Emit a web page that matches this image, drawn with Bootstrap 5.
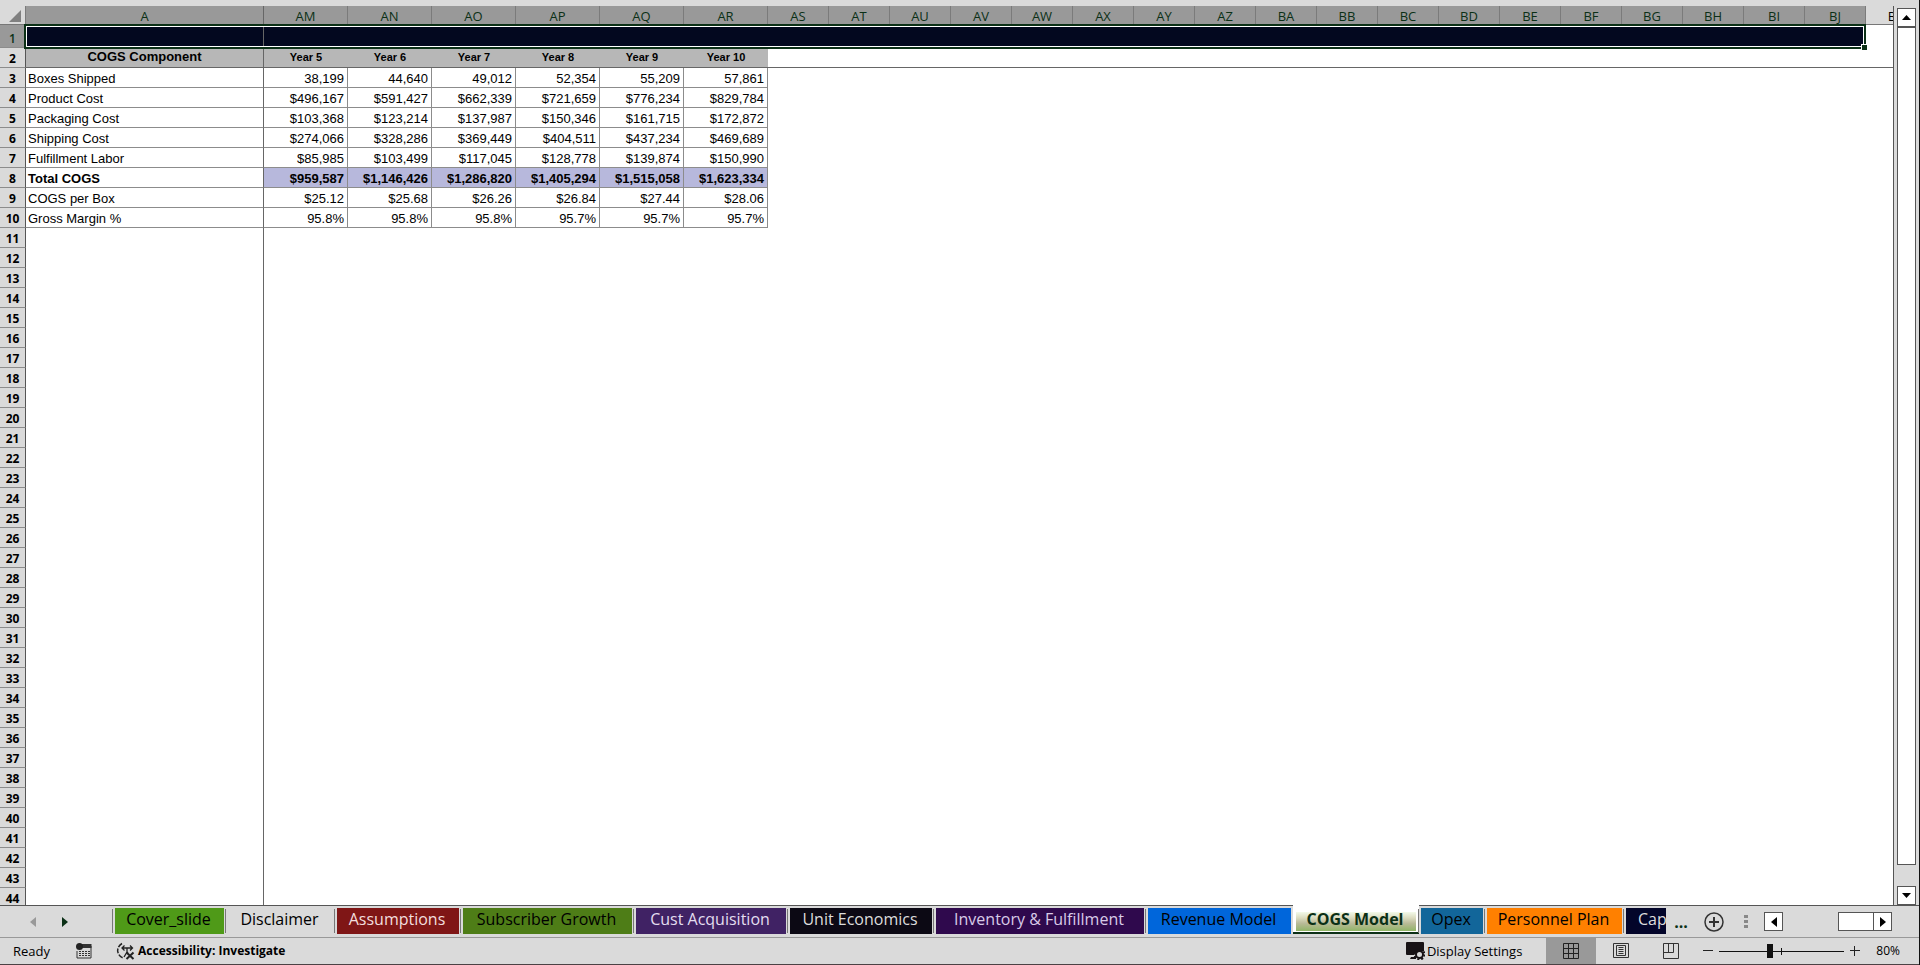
<!DOCTYPE html>
<html lang="en">
<head>
<meta charset="utf-8">
<meta name="viewport" content="width=device-width, initial-scale=1">
<title>COGS Model</title>
<link href="https://cdn.jsdelivr.net/npm/bootstrap@5.3.0/dist/css/bootstrap.min.css" rel="stylesheet">
<style>
  :root { --chrome: #dadada; --head-on: #999; --line: #8c8c8c; --edge: #555; --forest: #0b3016; }
  body { background: var(--chrome); color: #000; font-family: "Open Sans", "Noto Sans", sans-serif; font-size: 12px; line-height: 18px; }
  button { color: inherit; }

  /* worksheet grid */
  .workspace { border-right: 1px solid #111; }
  .sheet-view { margin-top: 6px; border-right: 1px solid var(--edge); background: #fff; }
  .sheet-grid { table-layout: fixed; width: 1927px; border-collapse: separate; border-spacing: 0; font-family: "Liberation Sans", Arial, sans-serif; font-size: 13px; line-height: 16px; }
  .sheet-grid th, .sheet-grid td { padding: 0; height: 20px; white-space: nowrap; overflow: hidden; }
  .w-num { width: 26px; } .w-label { width: 238px; } .w-year { width: 84px; } .w-plain { width: 61px; }
  .sheet-grid .col-head th { height: 19px; padding-top: 2px; background: var(--head-on); color: var(--forest); font: 500 13px/16px "Open Sans", "Noto Sans", sans-serif; text-align: center; border-right: 1px solid #7b7b7b; border-bottom: 1px solid #777; }
  .sheet-grid .col-head th.off, .sheet-grid .col-head th.pick-all { background: var(--chrome); }
  .sheet-grid .col-head th.off { color: #000; }
  .sheet-grid tbody th.row-num { padding-top: 3px; background: var(--chrome); font: 700 12px/16px "Open Sans", "Noto Sans", sans-serif; text-align: center; border-right: 1px solid var(--edge); border-bottom: 1px solid var(--line); }
  .sheet-grid tbody tr.banner th { height: 23px; padding-top: 6px; background: var(--head-on); color: var(--forest); font-weight: 600; }
  .banner .fill { background: #03081f; }
  .sheet-grid .label-cell, .sheet-grid .col-head .label-cell { border-right: 1px solid #666; }
  .titles .label-cell, .titles .year-cell { background: #b7b7b7; font-weight: 700; text-align: center; }
  .titles .year-cell { font-size: 11px; }
  .sheet-grid .titles td, .sheet-grid .titles .label-cell, .sheet-grid .titles .year-cell { padding-bottom: 1px; border-bottom: 1px solid #666; }
  .figures .label-cell { font-weight: 400; text-align: left; border-bottom: 1px solid var(--line); }
  .sheet-grid .figures .label-cell { padding: 3px 0 0 2px; }
  .sheet-grid .figures .year-cell { padding: 3px 3px 0 0; text-align: right; border-right: 1px solid var(--line); border-bottom: 1px solid var(--line); }
  .figures.total .label-cell, .figures.total .year-cell { font-weight: 700; }
  .figures.total .year-cell { background: #b7b8dc; }
  .selection { left: 24px; top: 18px; width: 1842px; height: 25px; border: 2px solid var(--forest); box-shadow: inset 0 0 0 1px #fff; pointer-events: none; }
  .selection::after { content: ""; position: absolute; right: -3px; bottom: -3px; width: 6px; height: 6px; background: var(--forest); border-left: 1px solid #fff; border-top: 1px solid #fff; }

  /* scrollbars */
  .v-scroll { width: 25px; padding: 8px 3px 0 3px; }
  .scroll-btn { width: 19px; height: 19px; padding: 0; border: 1px solid var(--edge); background: #fff; display: grid; place-items: center; flex: none; }
  .v-thumb { width: 19px; border: 1px solid var(--edge); background: #fff; margin-bottom: 21px; }
  .h-track { padding-left: 55px; }
  .h-thumb { width: 35px; height: 19px; border: 1px solid var(--edge); border-right: 0; background: #fff; }
  .h-scroll { margin-right: 27px; }

  /* sheet tabs */
  .tab-strip { height: 33px; border-top: 1px solid var(--edge); border-bottom: 1px solid #999; }
  .tab-nav { width: 111px; padding-left: 28px; gap: 22px; }
  .tab-nav button { padding: 0; border: 0; background: none; width: 10px; line-height: 10px; }
  .tabs { gap: 4px; padding-top: 2px; }
  .sheet-tab { position: relative; height: 26px; padding: 0 2px 4px 0; border: 0; font-size: 16px; line-height: 20px; text-align: center; white-space: nowrap; flex: none; }
  .sheet-tab:not(.current)::before { content: ""; position: absolute; left: -3px; top: 1px; height: 24px; border-left: 1px solid #777; }
  .t-cover { width: 109px; background: #4f9a18; }
  .t-disc { width: 105px; background: none; }
  .t-assume { width: 122px; background: #7f1616; color: #f3dede; }
  .t-subs { width: 169px; background: #4e7d17; }
  .t-cust { width: 150px; background: #402264; color: #e4def0; }
  .t-unit { width: 142px; background: #0c0914; color: #ddd; }
  .t-inv { width: 208px; background: #2f094d; color: #d9cbe8; }
  .t-rev { width: 143px; background: #0066db; }
  .t-opex { width: 62px; background: #12669a; }
  .t-people { width: 135px; background: #ff8000; }
  .t-cap { width: 40px; background: #03052a; color: #ddd; padding-left: 12px; padding-right: 0; text-align: left; }
  .sheet-tab.current { width: 126px; height: 29px; margin: -3px -2px 0 -2px; padding: 3px 2px 3px 0; color: var(--forest); font-weight: 700; background: linear-gradient(#f3faea, #dcdcc0 30%, #b9ba98 60%, #90b566) 3px 7px / 120px 19px no-repeat #fff; border-bottom: 2px solid var(--forest); }
  .more-tabs { width: 14px; padding: 0; border: 0; background: none; font-size: 16px; font-weight: 700; line-height: 20px; color: var(--forest); }
  .plain-btn { padding: 0; border: 0; background: none; display: grid; place-items: center; }

  /* status bar */
  .status { height: 27px; border-bottom: 1px solid #4b4144; padding-left: 13px; padding-right: 19px; font-size: 13px; }
  .macro { margin: 0 24px 0 26px; }
  .a11y { font-size: 12px; gap: 3px; }
  .display-set { gap: 2px; margin-right: 24px; }
  .view-btn { width: 50px; height: 26px; }
  .view-btn.on { background: #999; }
  .zoom-tools { gap: 6px; margin-left: 7px; }
  .zoom-value { padding-left: 10px; font-size: 12px; }
  .zoom-range { appearance: none; width: 125px; height: 16px; margin: 0; background: linear-gradient(#111, #111) 0 50% / 100% 1px no-repeat, linear-gradient(#111, #111) 62px 50% / 1px 7px no-repeat; }
  .zoom-range::-webkit-slider-thumb { appearance: none; width: 6px; height: 14px; background: #111; }
</style>
</head>
<body class="vh-100 overflow-hidden">
<div class="workspace d-flex flex-column h-100">
  <main class="d-flex flex-grow-1 overflow-hidden">
    <div class="sheet-view position-relative flex-grow-1 overflow-hidden">
      <table class="sheet-grid" aria-label="COGS Model">
        <colgroup id="cols"></colgroup>
        <thead><tr class="col-head" id="letters"></tr></thead>
        <tbody id="rows"></tbody>
      </table>
      <div class="selection position-absolute"></div>
    </div>
    <div class="v-scroll d-flex flex-column flex-shrink-0">
      <button class="scroll-btn" aria-label="Scroll up"><svg width="9" height="5"><path d="M4.500 0L9 5H0z"/></svg></button>
      <div class="v-thumb flex-grow-1"></div>
      <button class="scroll-btn" aria-label="Scroll down"><svg width="9" height="5"><path d="M0 0h9L4.500 5z"/></svg></button>
    </div>
  </main>

  <nav class="tab-strip d-flex flex-shrink-0 align-items-center" aria-label="Sheets">
    <div class="tab-nav d-flex align-items-center flex-shrink-0">
      <button aria-label="Previous sheets"><svg width="6" height="10"><path d="M6 0v10L0 5z" fill="#999"/></svg></button>
      <button aria-label="Next sheets"><svg width="6" height="10"><path d="M0 0v10l6-5z" fill="#0b3016"/></svg></button>
    </div>
    <div class="tabs d-flex align-self-start ps-1">
      <button class="sheet-tab t-cover">Cover_slide</button>
      <button class="sheet-tab t-disc">Disclaimer</button>
      <button class="sheet-tab t-assume">Assumptions</button>
      <button class="sheet-tab t-subs">Subscriber Growth</button>
      <button class="sheet-tab t-cust">Cust Acquisition</button>
      <button class="sheet-tab t-unit">Unit Economics</button>
      <button class="sheet-tab t-inv">Inventory &amp; Fulfillment</button>
      <button class="sheet-tab t-rev">Revenue Model</button>
      <button class="sheet-tab current" aria-current="page">COGS Model</button>
      <button class="sheet-tab t-opex">Opex</button>
      <button class="sheet-tab t-people">Personnel Plan</button>
      <button class="sheet-tab t-cap"><span class="d-block overflow-hidden">Cap</span></button>
    </div>
    <button class="more-tabs ms-2">...</button>
    <button class="plain-btn ms-3" aria-label="New sheet"><svg width="20" height="20" fill="none" stroke="#333"><circle cx="10" cy="10" r="9" stroke-width="1.500"/><path d="M10 5v10M5 10h10" stroke-width="2"/></svg></button>
    <div class="h-scroll d-flex align-items-center ms-auto">
      <svg class="me-3" width="4" height="14" fill="#888"><path d="M0 0h4v3H0zM0 5h4v3H0zM0 10h4v3H0z"/></svg>
      <button class="scroll-btn" aria-label="Scroll left"><svg width="6" height="10"><path d="M6 0v10L0 5z"/></svg></button>
      <div class="h-track"><div class="h-thumb"></div></div>
      <button class="scroll-btn" aria-label="Scroll right"><svg width="6" height="10"><path d="M0 0v10l6-5z"/></svg></button>
    </div>
  </nav>

  <footer class="status d-flex flex-shrink-0 align-items-center">
    <span>Ready</span>
    <button class="plain-btn macro" aria-label="Record macro"><svg width="16" height="16"><path d="M4 3h11v12H1V8" fill="none" stroke="#333"/><path d="M6 1h9.500v4H6z" fill="#333"/><circle cx="3.500" cy="3.500" r="3.500" fill="#222"/><path d="M3 8.500h2m1 0h2m1 0h2m1 0h2M3 10.500h2m1 0h2m1 0h2m1 0h2M3 12.500h2m1 0h2m1 0h2m1 0h2" stroke="#333"/></svg></button>
    <button class="plain-btn a11y d-flex align-items-center fw-bold"><svg width="19" height="18" fill="none" stroke="#222"><path d="M6 1.500C2 4 .5 8 2.500 12c1 2 2.500 3.500 5 4" stroke-width="1.500" stroke-dasharray="5 1.500"/><path d="M6 6h10M8.500 3.500L6 6l2.500 2.500M14 3.500L16.500 6 14 8.500M11 6v4l-3 5M11 10l1 1" stroke-width="1.300"/><path d="M10.500 10.500l7 6.500M17.500 10.500l-7 6.500" stroke-width="2"/></svg>Accessibility: Investigate</button>
    <div class="d-flex align-items-center ms-auto">
      <button class="plain-btn d-flex align-items-center display-set"><svg width="19" height="18"><path d="M1 0h16q1 0 1 1v8H12l-4 4H1q-1 0-1-1V1q0-1 1-1zM5 15h5v2H4z" fill="#171215"/><circle cx="13.500" cy="12.500" r="3.500" fill="#dadada" stroke="#171215" stroke-width="2"/><circle cx="13.500" cy="12.500" r="5" fill="none" stroke="#171215" stroke-width="2" stroke-dasharray="2 1.900"/></svg>Display Settings</button>
      <button class="plain-btn view-btn on" aria-label="Normal view"><svg width="16" height="16" fill="none" stroke="#222"><path d="M.5.5h15v15H.5zM.5 5.500h15M.5 10.500h15M5.500.5v15M10.500.5v15"/></svg></button>
      <button class="plain-btn view-btn" aria-label="Page layout view"><svg width="16" height="16" fill="none" stroke="#333"><path d="M.5.500h15v14H.5zM3.500 2.500h9v10h-9zM5.500 4.500h5M5.500 6.500h5M5.500 8.500h5M5.500 10.500h5"/></svg></button>
      <button class="plain-btn view-btn" aria-label="Page break view"><svg width="16" height="16" fill="none" stroke="#333"><path d="M.5.500h15v15H.5zM5.500.5v9M10.500.5v9M.5 9.500h10"/></svg></button>
      <div class="zoom-tools d-flex align-items-center">
        <button class="plain-btn" aria-label="Zoom out"><svg width="10" height="10"><path d="M0 4.500h10" stroke="#222"/></svg></button>
        <input class="zoom-range" type="range" min="0" max="200" value="80" aria-label="Zoom">
        <button class="plain-btn" aria-label="Zoom in"><svg width="10" height="10"><path d="M0 4.500h10M4.500 0v10" stroke="#222"/></svg></button>
        <span class="zoom-value">80%</span>
      </div>
    </div>
  </footer>
</div>
<script src="https://cdn.jsdelivr.net/npm/bootstrap@5.3.0/dist/js/bootstrap.bundle.min.js"></script>
<script>
  const yearCols = ["AM", "AN", "AO", "AP", "AQ", "AR"];
  const plainCols = ["AS","AT","AU","AV","AW","AX","AY","AZ","BA","BB","BC","BD","BE","BF","BG","BH","BI","BJ","BK"];
  const data = [
    ["Boxes Shipped", "38,199", "44,640", "49,012", "52,354", "55,209", "57,861"],
    ["Product Cost", "$496,167", "$591,427", "$662,339", "$721,659", "$776,234", "$829,784"],
    ["Packaging Cost", "$103,368", "$123,214", "$137,987", "$150,346", "$161,715", "$172,872"],
    ["Shipping Cost", "$274,066", "$328,286", "$369,449", "$404,511", "$437,234", "$469,689"],
    ["Fulfillment Labor", "$85,985", "$103,499", "$117,045", "$128,778", "$139,874", "$150,990"],
    ["Total COGS", "$959,587", "$1,146,426", "$1,286,820", "$1,405,294", "$1,515,058", "$1,623,334"],
    ["COGS per Box", "$25.12", "$25.68", "$26.26", "$26.84", "$27.44", "$28.06"],
    ["Gross Margin %", "95.8%", "95.8%", "95.8%", "95.7%", "95.7%", "95.7%"]
  ];
  const num = n => `<th class="row-num" scope="row">${n}</th>`;
  document.getElementById("cols").innerHTML = '<col class="w-num"><col class="w-label">' +
    '<col class="w-year">'.repeat(yearCols.length) + '<col class="w-plain">'.repeat(plainCols.length);
  document.getElementById("letters").innerHTML =
    '<th class="pick-all"><svg class="d-block ms-auto me-1" width="12" height="12"><path d="M12 0v12H0z" fill="#808080"/></svg></th><th class="label-cell">A</th>' +
    [...yearCols, ...plainCols].map(c => `<th${c === "BK" ? ' class="off"' : ""}>${c}</th>`).join("");

  let html = `<tr class="banner">${num(1)}<td class="label-cell fill"></td><td class="fill" colspan="24"></td><td></td></tr>`;
  html += `<tr class="titles">${num(2)}<th class="label-cell">COGS Component</th>` +
    yearCols.map((c, i) => `<th class="year-cell">Year ${i + 5}</th>`).join("") + '<td colspan="19"></td></tr>';
  data.forEach((r, i) => {
    html += `<tr class="figures${r[0] === "Total COGS" ? " total" : ""}">${num(i + 3)}<td class="label-cell">${r[0]}</td>` +
      r.slice(1).map(v => `<td class="year-cell">${v}</td>`).join("") + '<td colspan="19"></td></tr>';
  });
  for (let n = 11; n <= 44; n++) html += `<tr>${num(n)}<td class="label-cell"></td><td colspan="25"></td></tr>`;
  document.getElementById("rows").innerHTML = html;
</script>
</body>
</html>
